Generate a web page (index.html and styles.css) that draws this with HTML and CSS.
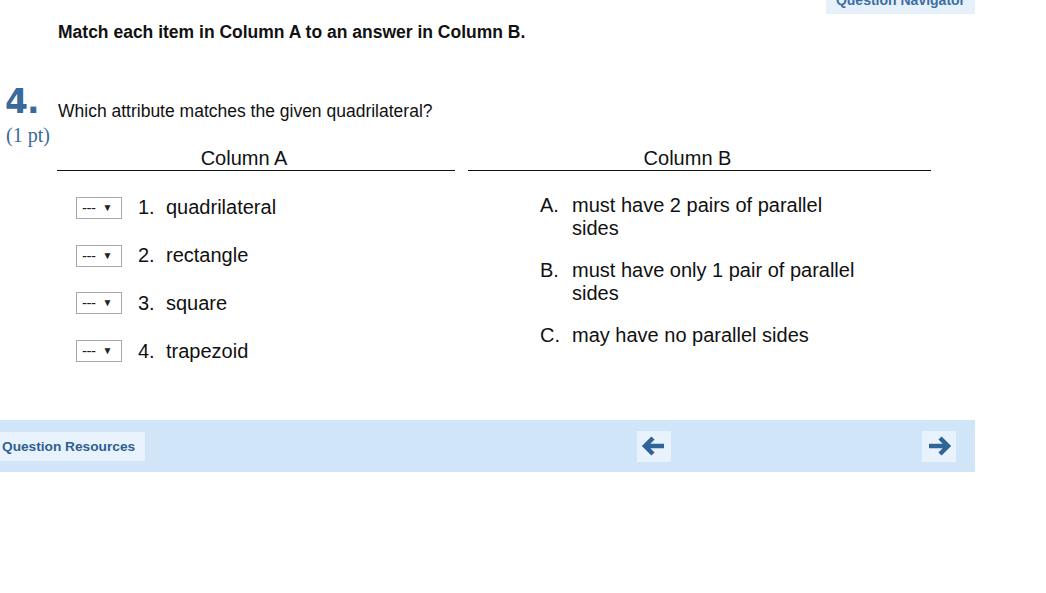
FILE: index.html
```html
<!DOCTYPE html>
<html>
<head>
<meta charset="utf-8">
<link rel="stylesheet" href="styles.css">
</head>
<body>
<div class="page">
  <div class="topbar">
    <div class="navtab"><span class="navtab-text">Question Navigator</span></div>
  </div>
  <div class="instruction">Match each item in Column A to an answer in Column B.</div>
  <div class="question">
    <div class="gutter">
      <div class="qnum">4.</div>
      <div class="qpts">(1 pt)</div>
    </div>
    <div class="qmain">
      <div class="qtext">Which attribute matches the given quadrilateral?</div>
      <div class="columns">
        <div class="col col-a">
          <div class="col-head">Column A</div>
          <div class="col-a-body">
            <div class="row"><div class="sel"><span class="dash">---</span><span class="caret">&#9660;</span></div><span class="num">1.</span><span class="item">quadrilateral</span></div>
            <div class="row"><div class="sel"><span class="dash">---</span><span class="caret">&#9660;</span></div><span class="num">2.</span><span class="item">rectangle</span></div>
            <div class="row"><div class="sel"><span class="dash">---</span><span class="caret">&#9660;</span></div><span class="num">3.</span><span class="item">square</span></div>
            <div class="row"><div class="sel"><span class="dash">---</span><span class="caret">&#9660;</span></div><span class="num">4.</span><span class="item">trapezoid</span></div>
          </div>
        </div>
        <div class="col col-b">
          <div class="col-head">Column B</div>
          <div class="col-b-body">
            <div class="ans"><span class="letter">A.</span><span class="atext">must have 2 pairs of parallel sides</span></div>
            <div class="ans"><span class="letter">B.</span><span class="atext">must have only 1 pair of parallel sides</span></div>
            <div class="ans"><span class="letter">C.</span><span class="atext">may have no parallel sides</span></div>
          </div>
        </div>
      </div>
    </div>
  </div>
  <div class="footer">
    <div class="res-btn">Question Resources</div>
    <div class="arrow-btn prev">
      <svg width="26" height="22" viewBox="0 0 26 22"><path d="M12 3 L4 11 L12 19 M5 11 L23 11" fill="none" stroke="#2f6497" stroke-width="4.5" stroke-linejoin="miter" stroke-linecap="butt"/></svg>
    </div>
    <div class="arrow-btn next">
      <svg width="26" height="22" viewBox="0 0 26 22"><path d="M14 3 L22 11 L14 19 M21 11 L3 11" fill="none" stroke="#2f6497" stroke-width="4.5" stroke-linejoin="miter" stroke-linecap="butt"/></svg>
    </div>
  </div>
</div>
</body>
</html>
```
FILE: styles.css
```css
html, body {
  margin: 0;
  padding: 0;
  background: #ffffff;
}
.page {
  width: 1046px;
  height: 593px;
  font-family: "Liberation Sans", Arial, sans-serif;
  color: #111;
  overflow: hidden;
}
.topbar {
  height: 14px;
  display: flex;
  justify-content: flex-end;
  padding-right: 71px;
}
.navtab {
  width: 149px;
  height: 14px;
  overflow: hidden;
  background: #e6f0fa;
  display: flex;
  justify-content: center;
}
.navtab-text {
  font-size: 14px;
  font-weight: bold;
  line-height: 14px;
  color: #3b6fa3;
  margin-top: -7px;
}
.instruction {
  margin-top: 8px;
  padding-left: 58px;
  font-size: 17.5px;
  font-weight: bold;
  line-height: 20px;
}
.question {
  display: flex;
  margin-top: 44px;
}
.gutter {
  width: 57px;
  flex: none;
  padding-left: 5px;
  box-sizing: border-box;
}
.qnum {
  font-family: "DejaVu Sans", sans-serif;
  font-size: 33px;
  font-weight: bold;
  line-height: 32px;
  color: #3a6a9c;
  letter-spacing: -1px;
}
.qpts {
  margin-top: 6px;
  padding-left: 1px;
  font-family: "Liberation Serif", "Times New Roman", serif;
  font-size: 20px;
  line-height: 22px;
  color: #3a6a9c;
  white-space: nowrap;
}
.qmain {
  flex: none;
}
.qtext {
  padding-left: 1px;
  padding-top: 15px;
  font-size: 17.5px;
  line-height: 20px;
}
.columns {
  display: flex;
  gap: 13px;
  margin-top: 26px;
}
.col-a { width: 398px; }
.col-b { width: 463px; }
.col-head {
  text-align: center;
  font-size: 20px;
  line-height: 23px;
  border-bottom: 1px solid #111;
  height: 23px;
  padding-right: 24px;
}
.col-a-body {
  padding-top: 13px;
  padding-left: 19px;
}
.row {
  height: 47.8px;
  display: flex;
  align-items: center;
  font-size: 20px;
  line-height: 23px;
}
.sel {
  width: 46px;
  height: 22px;
  box-sizing: border-box;
  border: 1px solid #a9a9a9;
  line-height: 20px;
  padding-left: 5px;
  color: #222;
  white-space: nowrap;
  display: flex;
  align-items: center;
}
.dash {
  font-size: 15px;
  letter-spacing: -0.5px;
}
.caret {
  font-size: 10px;
  margin-left: 7px;
}
.num {
  margin-left: 16px;
  width: 28px;
}
.col-b-body {
  padding-top: 23px;
  padding-left: 72px;
  display: flex;
  flex-direction: column;
  gap: 19px;
}
.ans {
  display: flex;
  font-size: 20px;
  line-height: 23px;
}
.letter {
  width: 32px;
  flex: none;
}
.atext {
  width: 290px;
}
.footer {
  margin-top: 45px;
  width: 975px;
  height: 52px;
  background: #d1e5f8;
  display: flex;
  align-items: center;
}
.res-btn {
  width: 145px;
  height: 29px;
  background: #e8f2fc;
  font-size: 13.7px;
  font-weight: bold;
  line-height: 29px;
  color: #2f5f92;
  padding-left: 2px;
  box-sizing: border-box;
  white-space: nowrap;
}
.arrow-btn {
  width: 34px;
  height: 31px;
  background: #e8f2fc;
  display: flex;
  align-items: center;
  justify-content: center;
}
.prev { margin-left: 492px; }
.next { margin-left: 251px; }
```
